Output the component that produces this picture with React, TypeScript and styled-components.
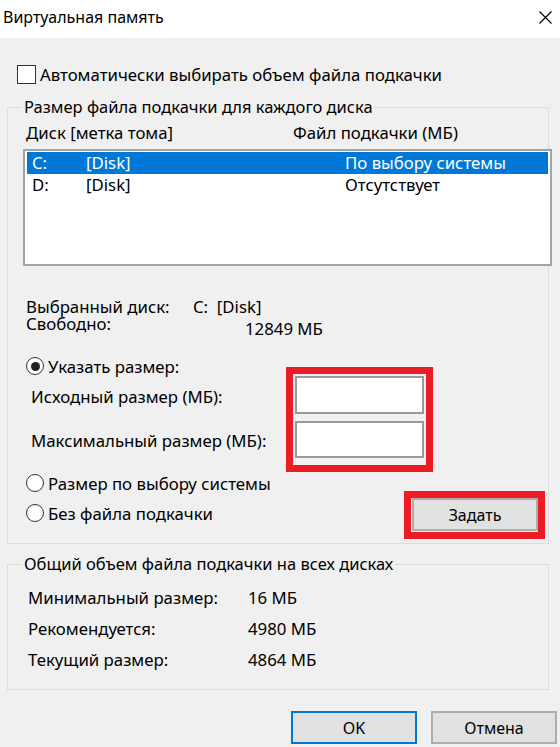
import styled, { createGlobalStyle } from "styled-components";

const GlobalStyle = createGlobalStyle`
  html, body {
    margin: 0;
    padding: 0;
    background: #f0f0f0;
  }
  body {
    font-family: "Noto Sans", "Open Sans", sans-serif;
    font-size: 16.8px;
    color: #000;
  }
`;

const Window = styled.div`
  width: 560px;
  height: 747px;
  overflow: hidden;
  display: flex;
  flex-direction: column;
  background: #f0f0f0;
`;

const TitleBar = styled.div`
  height: 38px;
  flex-shrink: 0;
  background: #fff;
  display: flex;
  align-items: center;
  justify-content: space-between;
  padding: 0 8px 4px 3px;
  box-sizing: border-box;
`;

const Title = styled.span`
  font-size: 16px;
`;

const Body = styled.div`
  padding: 0 3px 0 7px;
  display: flex;
  flex-direction: column;
`;

const CheckRow = styled.label`
  display: flex;
  align-items: center;
  gap: 4px;
  margin: 27px 0 0 10px;
  height: 19px;
`;

const CheckBox = styled.span`
  width: 17px;
  height: 17px;
  border: 1px solid #333;
  background: #fff;
`;

const Group = styled.fieldset<{ $top: number }>`
  margin: ${({ $top }) => $top}px 0 0 0;
  padding: 0 0 0 15px;
  min-width: 0;
  width: 542px;
  box-sizing: border-box;
  border: 1px solid #dcdcdc;
`;

const Legend = styled.legend`
  padding: 0 2px 0 3px;
  margin-left: -2px;
  line-height: 20px;
  font-size: 16.5px;
`;

const Columns = styled.div`
  display: flex;
  margin-top: 6px;
  height: 20px;
  line-height: 20px;
  padding-left: 3px;
`;

const Col = styled.span<{ $w?: number; $down?: number }>`
  width: ${({ $w }) => ($w ? `${$w}px` : "auto")};
  padding-top: ${({ $down }) => $down ?? 0}px;
  margin-bottom: ${({ $down }) => -($down ?? 0)}px;
  flex-shrink: 0;
`;

const ListBox = styled.div`
  margin-top: 6px;
  width: 529px;
  height: 117px;
  box-sizing: border-box;
  border: 2px solid #a3a3a3;
  background: #fff;
  padding: 1px 2px;
`;

const ListRow = styled.div<{ $selected?: boolean }>`
  display: flex;
  height: 22px;
  line-height: 22px;
  background: ${({ $selected }) => ($selected ? "#0078d7" : "transparent")};
  color: ${({ $selected }) => ($selected ? "#fff" : "#000")};
  padding-left: 5px;
`;

const InfoRow = styled.div<{ $top?: number }>`
  display: flex;
  align-items: flex-start;
  height: 17px;
  margin-top: ${({ $top }) => $top ?? 0}px;
  line-height: 17px;
  padding-left: 3px;
`;

const RadioRow = styled.label<{ $lift?: number }>`
  display: flex;
  align-items: center;
  gap: 4px;
  height: 22px;
  padding-left: 3px;
  margin-top: ${({ $lift }) => ($lift ? -$lift : 0)}px;
`;

const Radio = styled.span<{ $checked?: boolean }>`
  width: 16px;
  height: 16px;
  border-radius: 50%;
  border: 1px solid #333;
  background: #fff;
  display: flex;
  align-items: center;
  justify-content: center;

  &::after {
    content: "";
    width: 9px;
    height: 9px;
    border-radius: 50%;
    background: #222;
    display: ${({ $checked }) => ($checked ? "block" : "none")};
  }
`;

const SizeArea = styled.div`
  display: flex;
  align-items: flex-start;
  margin-top: 23px;
`;

const SizeLabels = styled.div`
  width: 263px;
  display: flex;
  flex-direction: column;
`;

const FieldLabel = styled.div<{ $top: number }>`
  margin-top: ${({ $top }) => $top}px;
  line-height: 20px;
  padding-left: 8px;
`;

const RedFrame = styled.div<{ $top?: number; $pad: string }>`
  border: 7px solid #ed1c24;
  margin-top: ${({ $top }) => $top ?? 0}px;
  padding: ${({ $pad }) => $pad};
  display: flex;
  flex-direction: column;
  gap: 7px;
  background: #f0f0f0;
`;

const TextInput = styled.div<{ $h: number }>`
  width: 129px;
  height: ${({ $h }) => $h}px;
  box-sizing: border-box;
  border: 2px solid #9a9a9a;
  background: #fff;
`;

const LastRow = styled.div`
  display: flex;
  align-items: center;
  justify-content: space-between;
  margin-top: -3px;
  margin-bottom: 4px;
  padding-right: 3px;
`;

const Button = styled.div<{ $default?: boolean }>`
  width: 126px;
  height: 33px;
  box-sizing: border-box;
  background: #e1e1e1;
  border: 2px solid ${({ $default }) => ($default ? "#0078d7" : "#adadad")};
  display: flex;
  align-items: center;
  justify-content: center;
  font-size: 16px;
`;

const Totals = styled.div`
  padding: 8px 0 14px;
`;

const TotalRow = styled.div`
  display: flex;
  line-height: 31px;
  padding-left: 5px;
`;

const TotalLabel = styled.span`
  width: 220px;
  flex-shrink: 0;
`;

const Footer = styled.div`
  display: flex;
  justify-content: flex-end;
  gap: 14px;
  margin-top: 21px;
`;

const CloseIcon = () => (
  <svg width="13" height="13" viewBox="0 0 13 13">
    <path d="M0.5 0.5L12.5 12.5M12.5 0.5L0.5 12.5" stroke="#000" strokeWidth="1.2" />
  </svg>
);

export default function App() {
  return (
    <Window>
      <GlobalStyle />
      <TitleBar>
        <Title>Виртуальная память</Title>
        <CloseIcon />
      </TitleBar>
      <Body>
        <CheckRow>
          <CheckBox />
          Автоматически выбирать объем файла подкачки
        </CheckRow>

        <Group $top={13}>
          <Legend>Размер файла подкачки для каждого диска</Legend>
          <Columns>
            <Col $w={267}>Диск [метка тома]</Col>
            <Col>Файл подкачки (МБ)</Col>
          </Columns>
          <ListBox>
            <ListRow $selected>
              <Col $w={54}>C:</Col>
              <Col $w={259}>[Disk]</Col>
              <Col>По выбору системы</Col>
            </ListRow>
            <ListRow>
              <Col $w={54}>D:</Col>
              <Col $w={259}>[Disk]</Col>
              <Col>Отсутствует</Col>
            </ListRow>
          </ListBox>

          <InfoRow $top={32}>
            <Col $w={167}>Выбранный диск:</Col>
            <Col>C:&nbsp;&nbsp;[Disk]</Col>
          </InfoRow>
          <InfoRow>
            <Col $w={219}>Свободно:</Col>
            <Col $down={5}>12849 МБ</Col>
          </InfoRow>

          <SizeArea>
            <SizeLabels>
              <RadioRow>
                <Radio $checked />
                Указать размер:
              </RadioRow>
              <FieldLabel $top={10}>Исходный размер (МБ):</FieldLabel>
              <FieldLabel $top={24}>Максимальный размер (МБ):</FieldLabel>
            </SizeLabels>
            <RedFrame $top={12} $pad="2px 2px 7px 2px">
              <TextInput $h={38} />
              <TextInput $h={37} />
            </RedFrame>
          </SizeArea>

          <RadioRow>
            <Radio />
            Размер по выбору системы
          </RadioRow>
          <LastRow>
            <RadioRow $lift={4}>
              <Radio />
              Без файла подкачки
            </RadioRow>
            <RedFrame $pad="0 0 1px 1px">
              <Button>Задать</Button>
            </RedFrame>
          </LastRow>
        </Group>

        <Group $top={10}>
          <Legend>Общий объем файла подкачки на всех дисках</Legend>
          <Totals>
            <TotalRow>
              <TotalLabel>Минимальный размер:</TotalLabel>
              <span>16 МБ</span>
            </TotalRow>
            <TotalRow>
              <TotalLabel>Рекомендуется:</TotalLabel>
              <span>4980 МБ</span>
            </TotalRow>
            <TotalRow>
              <TotalLabel>Текущий размер:</TotalLabel>
              <span>4864 МБ</span>
            </TotalRow>
          </Totals>
        </Group>

        <Footer>
          <Button $default>OK</Button>
          <Button>Отмена</Button>
        </Footer>
      </Body>
    </Window>
  );
}
